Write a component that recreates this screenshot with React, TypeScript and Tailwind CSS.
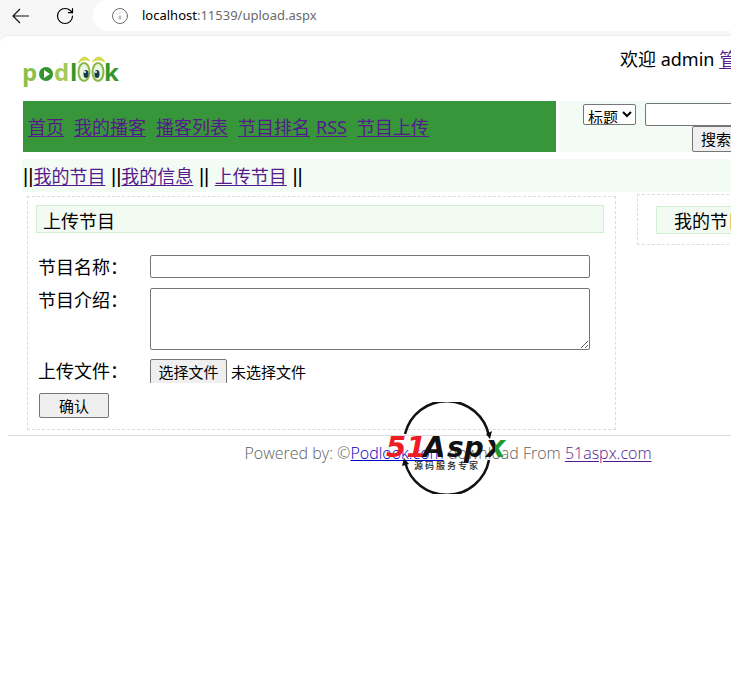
import type { ReactNode } from "react";
import { Info, RotateCw } from "lucide-react";

const navItems = ["首页", "我的播客", "播客列表", "节目排名", "RSS", "节目上传"];

const VisitedLink = ({ children }: { children: ReactNode }) => (
    <a href="#" className="text-[#551a8b] underline underline-offset-2">
        {children}
    </a>
);

const Pipes = ({ children }: { children: string }) => (
    <span className="font-['Liberation_Sans',sans-serif] text-xl leading-6">{children}</span>
);

const BrowserBar = () => (
    <div className="flex h-[35px] items-start bg-[#f7f7f7]">
        <button type="button" aria-label="Back" className="mt-2 ml-3">
            <svg width="18" height="16" viewBox="0 0 18 16" fill="none" stroke="#111" strokeWidth="1.2">
                <path d="M17 8 H1 M8 1 L1 8 L8 15" />
            </svg>
        </button>
        <button type="button" aria-label="Reload" className="mt-[6px] ml-[25px]">
            <RotateCw size={20} strokeWidth={1.4} />
        </button>
        <div className="ml-[18px] flex h-[31px] flex-1 items-center rounded-l-full bg-white pl-[18px] text-[13px] text-[#6b6b6b]">
            <Info size={18} strokeWidth={1.3} className="mr-[13px]" />
            <span className="text-black">localhost</span>:11539/upload.aspx
        </div>
    </div>
);

const PodlookLogo = () => (
    <svg width="100" height="34" viewBox="0 0 100 34" role="img" aria-label="podlook">
        <g fontFamily="Open Sans, sans-serif" fontWeight="700" fontSize="24">
            <text x="-1" y="26" fill="#8cc04b">p</text>
            <text x="31" y="26" fill="#a3c957">d</text>
            <text x="47" y="26" fill="#33962c">l</text>
            <text x="81" y="26" fill="#33962c">k</text>
        </g>
        <circle cx="23" cy="19" r="7" fill="#33962c" />
        <path d="M21 15 L27 19 L21 23 Z" fill="#fff" />
        <path d="M55 8 Q61 -3 67 6 Q61 3 55 8Z M69 7 Q76 -3 82 7 Q75 3 69 7Z" fill="#d3db52" stroke="#d3db52" />
        <g fill="#eaf5df" stroke="#8ab74a" strokeWidth="2">
            <ellipse cx="61" cy="17" rx="5.5" ry="9" />
            <ellipse cx="75" cy="17" rx="5.5" ry="9" />
        </g>
        <ellipse cx="63" cy="19" rx="2.5" ry="4" fill="#173b4b" />
        <ellipse cx="74" cy="19" rx="2.5" ry="4" fill="#173b4b" />
        <circle cx="62" cy="17" r="1" fill="#fff" />
        <circle cx="73" cy="17" r="1" fill="#fff" />
    </svg>
);

const AspxLogo = () => (
    <svg width="126" height="92" viewBox="0 0 126 92" role="img" aria-label="51Aspx 源码服务专家">
        <defs>
            <linearGradient id="xFill">
                <stop offset="50%" stopColor="#111" />
                <stop offset="50%" stopColor="#1d9a2a" />
            </linearGradient>
        </defs>
        <g fill="none" stroke="#111" strokeWidth="2.5">
            <path d="M20 32 A43 43 0 0 1 104 34" />
            <path d="M20 60 A43 43 0 0 0 104 58" />
        </g>
        <path d="M101 32 L107 29 L105 37Z M17 64 L19 56 L24 62Z" fill="#111" />
        <g fontFamily="DejaVu Sans, sans-serif" fontWeight="700" fontStyle="italic">
            <text x="1" y="55" fontSize="29" fill="#ee1c25">51</text>
            <text x="38" y="55" fontSize="29" fill="#111">A</text>
            <text x="62" y="55" fontSize="28" fill="#111">sp</text>
            <text x="101" y="55" fontSize="30" fill="url(#xFill)">x</text>
        </g>
        <text x="29 40 51 62 73 84" y="67" fontFamily="Noto Sans CJK SC, sans-serif" fontWeight="500" fontSize="9" fill="#222">
            源码服务专家
        </text>
    </svg>
);

const UploadForm = () => (
    <form className="flex flex-col pl-[10px] text-lg leading-6">
        <div className="flex h-[33px] items-start">
            <label htmlFor="title" className="w-28 shrink-0">节目名称：</label>
            <input id="title" type="text" className="h-[23px] w-[440px] rounded-xs border border-[#767676] px-1 text-sm" />
        </div>
        <div className="flex h-[71px] items-start">
            <label htmlFor="intro" className="w-28 shrink-0">节目介绍：</label>
            <textarea id="intro" className="h-[62px] w-[440px] rounded-xs border border-[#767676] px-1 text-sm" />
        </div>
        <div className="flex h-[34px] items-start">
            <span className="w-28 shrink-0">上传文件：</span>
            <label htmlFor="file" className="flex h-6 overflow-hidden text-[15px]">
                <span className="h-7 w-[77px] rounded-xs border border-[#767676] bg-[#efefef] text-center leading-6">选择文件</span>
                <span className="pl-1 leading-[26px]">未选择文件</span>
            </label>
            <input id="file" type="file" className="sr-only" />
        </div>
        <button type="button" className="ml-px h-[25px] w-[70px] rounded-xs border border-[#767676] bg-[#efefef] text-[15px] leading-6">
            确认
        </button>
    </form>
);

export default function App() {
    return (
        <div className="min-h-screen overflow-hidden bg-[#f7f7f7] font-['Noto_Sans','Noto_Sans_CJK_SC',sans-serif] font-normal text-black">
            <BrowserBar />
            <div className="min-h-[calc(100vh-35px)] w-full min-w-[888px] rounded-tl-lg border-t border-[#ececec] bg-white pl-2">
                <header className="flex h-[65px] items-start pl-[15px]">
                    <div className="w-[597px] shrink-0 pt-[19px]">
                        <PodlookLogo />
                    </div>
                    <div className="pt-[11px] text-lg leading-6">
                        欢迎 admin <VisitedLink>管理</VisitedLink>
                    </div>
                </header>

                <div className="flex gap-[3px] pl-[15px]">
                    <nav className="flex h-[51px] w-[533px] shrink-0 items-center bg-[#38963a] pl-[5px] text-lg">
                        {navItems.map((item) => (
                            <span key={item} className={item === "RSS" ? "-ml-1 mr-[10px]" : "mr-[10px]"}>
                                <VisitedLink>{item}</VisitedLink>
                            </span>
                        ))}
                    </nav>
                    <form className="flex h-[51px] flex-1 flex-col bg-[#f3fbf5] pt-[2px] pl-6 text-[15px]">
                        <div className="flex items-start gap-[9px]">
                            <select aria-label="搜索类型" className="mt-px h-[21px] w-[53px] rounded-xs border border-[#767676] bg-white font-['Noto_Sans_CJK_SC',sans-serif] text-[15px]">
                                <option>标题</option>
                            </select>
                            <input type="text" aria-label="关键字" className="h-[23px] w-[170px] rounded-xs border border-[#767676] bg-white px-1" />
                        </div>
                        <button type="button" className="ml-[109px] h-[26px] w-12 rounded-xs border border-[#767676] bg-[#efefef] leading-6">
                            搜索
                        </button>
                    </form>
                </div>

                <nav className="mt-[7px] ml-[14px] h-[33px] bg-[#f3fbf5] pl-px text-lg leading-[34px] whitespace-pre">
                    <Pipes>||</Pipes><VisitedLink>我的节目</VisitedLink><Pipes>{" ||"}</Pipes><VisitedLink>我的信息</VisitedLink><Pipes>{" || "}</Pipes><VisitedLink>上传节目</VisitedLink><Pipes>{" ||"}</Pipes>
                </nav>

                <main className="flex items-start gap-[21px] pt-[2px] pl-[19px]">
                    <section className="mt-[2px] h-[234px] w-[589px] shrink-0 border border-dashed border-[#dcdcdc] pt-2">
                        <h2 className="mr-[11px] mb-[22px] ml-2 h-7 border border-[#d3efd3] bg-[#f2fbf2] pl-[6px] text-lg leading-[30px]">
                            上传节目
                        </h2>
                        <UploadForm />
                    </section>
                    <aside className="flex-1 border border-dashed border-[#dcdcdc] pt-[11px] pb-[10px] pl-[18px]">
                        <h2 className="h-7 border border-[#d3efd3] bg-[#f2fbf2] pl-[17px] text-lg leading-7">我的节目</h2>
                    </aside>
                </main>

                <footer className="relative mt-[5px] border-t border-[#dcdcdc] pt-[5px] text-center font-['Open_Sans',sans-serif] text-base leading-6 font-light text-[#606060]">
                    Powered by: ©
                    <a href="#" className="text-[#0000cc] underline">Podlook.com</a> download From <VisitedLink>51aspx.com</VisitedLink>
                    <div className="pointer-events-none absolute inset-x-0 -top-[34px] flex justify-center">
                        <AspxLogo />
                    </div>
                </footer>
            </div>
        </div>
    );
}
